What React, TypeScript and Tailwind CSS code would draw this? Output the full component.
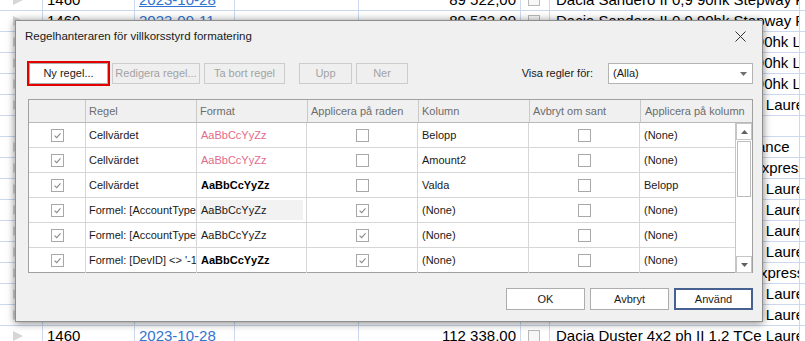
import React from 'react';

type SheetRow = { id: string; date: string; amount: string; desc: string };

const sheetRows: SheetRow[] = [
  { id: '1460', date: '2023-10-28', amount: '89 522,00', desc: 'Dacia Sandero II 0,9 90hk Stepway P' },
  { id: '1460', date: '2023-09-11', amount: '89 522,00', desc: 'Dacia Sandero II 0,9 90hk Stepway P' },
  { id: '1460', date: '2023-09-11', amount: '112 338,00', desc: 'Dacia Logan MCV III 0,9 TCe 90hk Laureate' },
  { id: '1460', date: '2023-09-11', amount: '112 338,00', desc: 'Dacia Logan MCV III 0,9 TCe 90hk Laureate' },
  { id: '1460', date: '2023-09-11', amount: '112 338,00', desc: 'Dacia Logan MCV III 0,9 TCe 90hk Laureate' },
  { id: '1460', date: '2023-09-11', amount: '112 338,00', desc: 'Dacia Sandero II 0,9 TCe 90hk Laureate' },
  { id: '', date: '', amount: '', desc: '' },
  { id: '1460', date: '2023-09-11', amount: '98 100,00', desc: 'Dacia Logan 1,0 SCe 75 Ambiance' },
  { id: '1460', date: '2023-09-11', amount: '98 100,00', desc: 'Dacia Lodgy II 1,5 dCi 110hk Expression' },
  { id: '1460', date: '2023-09-11', amount: '112 338,00', desc: 'Dacia Sandero II 0,9 TCe 90hk Laureate' },
  { id: '1460', date: '2023-09-11', amount: '112 338,00', desc: 'Dacia Sandero II 0,9 TCe 90hk Laureate' },
  { id: '1460', date: '2023-09-11', amount: '112 338,00', desc: 'Dacia Sandero II 0,9 TCe 90hk Laureate' },
  { id: '1460', date: '2023-09-11', amount: '112 338,00', desc: 'Dacia Sandero II 0,9 TCe 90hk Laureate' },
  { id: '1460', date: '2023-09-11', amount: '98 100,00', desc: 'Dacia Dokker 1,5 dCi 110 hk Expression' },
  { id: '1460', date: '2023-10-28', amount: '112 338,00', desc: 'Dacia Sandero II 0,9 TCe 90hk Laureate' },
  { id: '1460', date: '2023-10-28', amount: '112 338,00', desc: 'Dacia Sandero II 0,9 TCe 90hk Laureate' },
  { id: '1460', date: '2023-10-28', amount: '112 338,00', desc: 'Dacia Duster 4x2 ph II 1.2 TCe Laureate' },
];

type Rule = {
  on: boolean;
  rule: string;
  fmt: 'pink' | 'bold' | 'plain' | 'shaded';
  row: boolean;
  col: string;
  stop: boolean;
  applyCol: string;
};

const rules: Rule[] = [
  { on: true, rule: 'Cellvärdet', fmt: 'pink', row: false, col: 'Belopp', stop: false, applyCol: '(None)' },
  { on: true, rule: 'Cellvärdet', fmt: 'pink', row: false, col: 'Amount2', stop: false, applyCol: '(None)' },
  { on: true, rule: 'Cellvärdet', fmt: 'bold', row: false, col: 'Valda', stop: false, applyCol: 'Belopp' },
  { on: true, rule: 'Formel: [AccountType] = 1', fmt: 'shaded', row: true, col: '(None)', stop: false, applyCol: '(None)' },
  { on: true, rule: 'Formel: [AccountType] = 2', fmt: 'plain', row: true, col: '(None)', stop: false, applyCol: '(None)' },
  { on: true, rule: "Formel: [DevID] <> '-1'", fmt: 'bold', row: true, col: '(None)', stop: false, applyCol: '(None)' },
];

function RowArrow() {
  return (
    <svg width="10" height="10" viewBox="0 0 10 10" className="ml-[13px]">
      <polygon points="0,0 10,5 0,10" fill="#d6d6d6" />
    </svg>
  );
}

function CheckBox({ checked }: { checked: boolean }) {
  return (
    <span className="flex h-[13px] w-[13px] items-center justify-center border border-[#a8a8a8] bg-white">
      {checked && (
        <svg width="9" height="9" viewBox="0 0 9 9">
          <path d="M1.6 4.6 L3.7 6.6 L7.5 2.4" fill="none" stroke="#8a8a8a" strokeWidth="1.1" />
        </svg>
      )}
    </span>
  );
}

function FormatSample({ fmt }: { fmt: Rule['fmt'] }) {
  if (fmt === 'pink') return <span className="pl-[4px] text-[#e36a8b]">AaBbCcYyZz</span>;
  if (fmt === 'bold') return <span className="pl-[4px] font-bold text-black">AaBbCcYyZz</span>;
  if (fmt === 'shaded')
    return (
      <span className="mx-[3px] flex h-[20px] flex-1 items-center bg-[#f2f2f2] pl-[1px] text-[#1a1a1a]">AaBbCcYyZz</span>
    );
  return <span className="pl-[4px] text-[#1a1a1a]">AaBbCcYyZz</span>;
}

function DisabledButton({ label, className }: { label: string; className: string }) {
  return (
    <div
      className={`flex h-[21px] items-center justify-center border border-[#cccccc] bg-[#efefef] text-[#a2a2a2] ${className}`}
    >
      {label}
    </div>
  );
}

function DialogButton({ label, className }: { label: string; className: string }) {
  return (
    <div className={`flex h-[22px] w-[79px] items-center justify-center bg-white text-[#1a1a1a] ${className}`}>
      {label}
    </div>
  );
}

export default function App() {
  return (
    <div className="relative h-[341px] w-[805px] overflow-hidden bg-white font-['Liberation_Sans',Arial,sans-serif] text-[15px] text-black">
      {/* grid behind the dialog */}
      <div className="-mt-[10px]">
        {sheetRows.map((r, i) => (
          <div key={i} className="flex h-[21px] border-b border-[#cbd8ee]">
            <div className="flex w-[43px] shrink-0 items-center border-r border-[#cbd8ee]">{r.id && <RowArrow />}</div>
            <div className="flex w-[92px] shrink-0 items-center border-r border-[#cbd8ee] pl-[4px]">{r.id}</div>
            <div className="flex w-[100px] shrink-0 items-center border-r border-[#cbd8ee] pl-[4px] text-[#2f74d0] underline">
              {r.date}
            </div>
            <div className="w-[124px] shrink-0 border-r border-[#cbd8ee]" />
            <div className="flex w-[162px] shrink-0 items-center justify-end border-r border-[#cbd8ee] pr-[4px]">
              {r.amount}
            </div>
            <div className="flex w-[29px] shrink-0 items-center border-r border-[#cbd8ee] pl-[7px]">
              {r.id && <span className="h-[12px] w-[12px] border border-[#b9b9b9] bg-[#f7f7f7]" />}
            </div>
            <div className="flex w-[250px] shrink-0 items-center overflow-hidden whitespace-nowrap border-r border-[#cbd8ee] pl-[6px]">
              {r.desc}
            </div>
            <div className="flex-1" />
          </div>
        ))}
      </div>

      {/* conditional formatting dialog */}
      <div className="absolute left-[15px] top-[20px] flex h-[302px] w-[748px] flex-col border border-[#8e8e8e] bg-[#f0f0f0] font-['Liberation_Sans',Arial,sans-serif] text-[11px] text-[#1a1a1a] shadow-[0_1px_8px_rgba(0,0,0,0.5)]">
        <div className="flex h-[31px] shrink-0 items-center justify-between pl-[9px] pr-[16px]">
          <span className="text-[11.5px] text-[#1a1a1a]">Regelhanteraren för villkorsstyrd formatering</span>
          <svg width="11" height="11" viewBox="0 0 11 11">
            <path d="M0.5 0.5 L10.5 10.5 M10.5 0.5 L0.5 10.5" stroke="#333" strokeWidth="1" />
          </svg>
        </div>

        <div className="mt-[9px] flex h-[25px] shrink-0 items-center pl-[11px] pr-[9px]">
          <div className="flex h-[25px] w-[83px] border-2 border-[#e50000]">
            <div className="flex flex-1 items-center justify-center border border-[#adadad] bg-white">Ny regel...</div>
          </div>
          <DisabledButton label="Redigera regel..." className="ml-[2px] w-[88px]" />
          <DisabledButton label="Ta bort regel" className="ml-[4px] w-[81px]" />
          <DisabledButton label="Upp" className="ml-[14px] w-[53px]" />
          <DisabledButton label="Ner" className="ml-[4px] w-[52px]" />
          <div className="flex-1" />
          <span>Visa regler för:</span>
          <div className="ml-[15px] flex h-[21px] w-[145px] items-center justify-between border border-[#b4b4b4] bg-white pl-[4px] pr-[5px]">
            <span>(Alla)</span>
            <svg width="7" height="4" viewBox="0 0 7 4">
              <polygon points="0,0 7,0 3.5,4" fill="#6e6e6e" />
            </svg>
          </div>
        </div>

        <div className="ml-[12px] mt-[13px] flex h-[174px] w-[725px] shrink-0 flex-col border border-[#a0a0a0] bg-white">
          <div className="flex h-[23px] shrink-0 border-b border-[#b9b9b9] bg-[#f0f0f0] text-[#6d6d6d]">
            <div className="w-[57px] shrink-0 border-r border-[#c9c9c9]" />
            {['Regel', 'Format', 'Applicera på raden', 'Kolumn', 'Avbryt om sant'].map((h, i) => (
              <div
                key={h}
                className={`flex w-[111px] shrink-0 items-center border-r border-[#c9c9c9] pl-[3px] ${i === 1 ? 'w-[110px]' : ''}`}
              >
                {h}
              </div>
            ))}
            <div className="flex flex-1 items-center pl-[4px]">Applicera på kolumn</div>
          </div>

          <div className="flex flex-1">
            <div className="flex flex-1 flex-col">
              {rules.map((r, i) => (
                <div key={i} className={`flex h-[25px] shrink-0 ${i < rules.length - 1 ? 'border-b border-[#d6d6d6]' : ''}`}>
                  <div className="flex w-[57px] shrink-0 items-center justify-center border-r border-[#d6d6d6] pl-[1px]">
                    <CheckBox checked={r.on} />
                  </div>
                  <div className="flex w-[111px] shrink-0 items-center overflow-hidden whitespace-nowrap border-r border-[#d6d6d6] pl-[3px]">
                    {r.rule}
                  </div>
                  <div className="flex w-[110px] shrink-0 items-center border-r border-[#d6d6d6]">
                    <FormatSample fmt={r.fmt} />
                  </div>
                  <div className="flex w-[111px] shrink-0 items-center justify-center border-r border-[#d6d6d6]">
                    <CheckBox checked={r.row} />
                  </div>
                  <div className="flex w-[111px] shrink-0 items-center border-r border-[#d6d6d6] pl-[4px]">{r.col}</div>
                  <div className="flex w-[111px] shrink-0 items-center justify-center border-r border-[#d6d6d6]">
                    <CheckBox checked={r.stop} />
                  </div>
                  <div className="flex flex-1 items-center pl-[4px]">{r.applyCol}</div>
                </div>
              ))}
            </div>

            <div className="flex w-[17px] shrink-0 flex-col border-l border-[#c6c6c6] bg-white">
              <div className="flex h-[17px] shrink-0 items-center justify-center border border-[#c6c6c6]">
                <svg width="7" height="4" viewBox="0 0 7 4">
                  <polygon points="0,4 3.5,0 7,4" fill="#606060" />
                </svg>
              </div>
              <div className="mx-[1px] mt-[1px] h-[56px] shrink-0 border border-[#bcbcbc] bg-white" />
              <div className="flex-1" />
              <div className="flex h-[17px] shrink-0 items-center justify-center border border-[#c6c6c6]">
                <svg width="7" height="4" viewBox="0 0 7 4">
                  <polygon points="0,0 7,0 3.5,4" fill="#606060" />
                </svg>
              </div>
            </div>
          </div>
        </div>

        <div className="mt-[15px] flex justify-end gap-[5px] pr-[9px]">
          <DialogButton label="OK" className="border border-[#adadad]" />
          <DialogButton label="Avbryt" className="border border-[#adadad]" />
          <DialogButton label="Använd" className="border-2 border-[#46618f]" />
        </div>
      </div>
    </div>
  );
}
